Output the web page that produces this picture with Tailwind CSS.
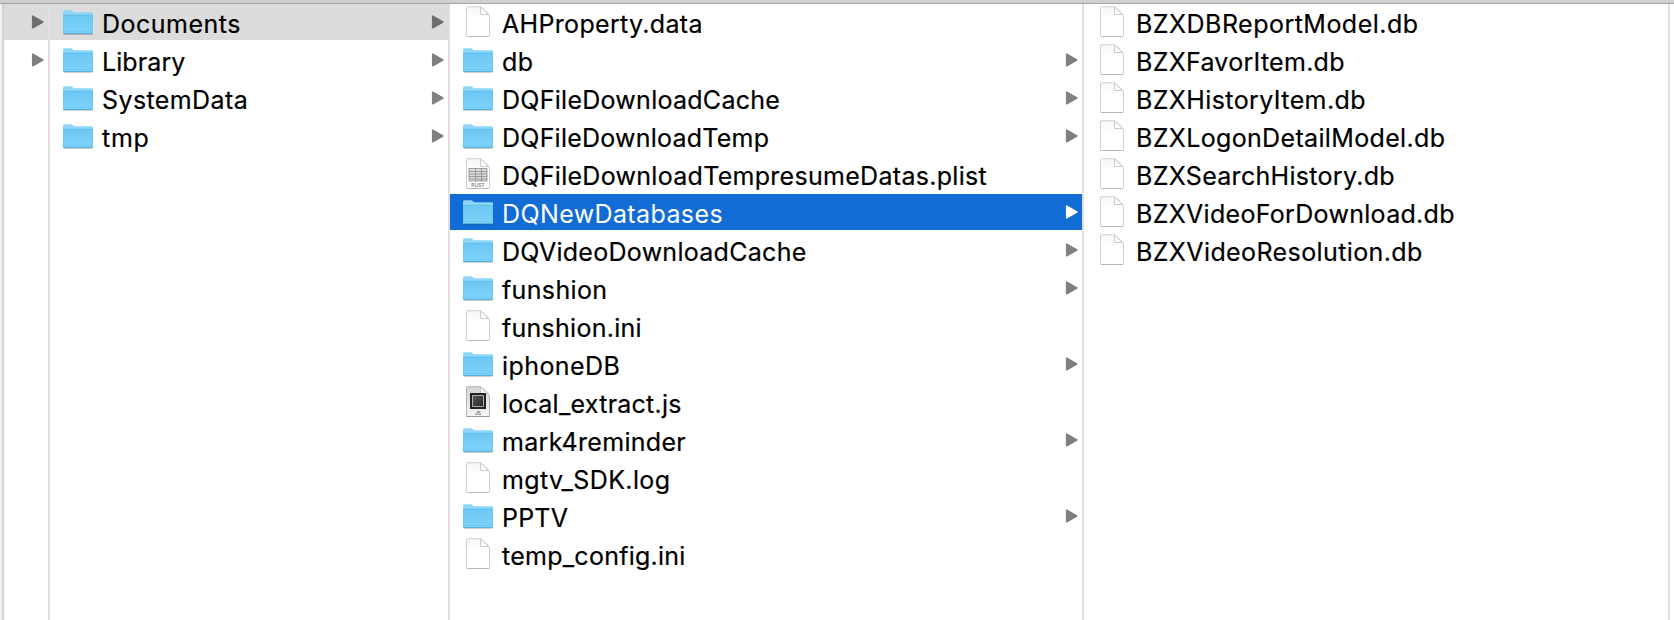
<!DOCTYPE html>
<html lang="en">
<head>
<meta charset="utf-8">
<title>Finder</title>
<script src="https://cdn.jsdelivr.net/npm/@tailwindcss/browser@4"></script>
</head>
<body class="bg-white">
<svg class="absolute size-0">
  <defs>
    <linearGradient id="fold" x1="0" y1="0" x2="0" y2="1"><stop offset="0" stop-color="#6bc8f4"/><stop offset="1" stop-color="#7fd3fa"/></linearGradient>
    <linearGradient id="page" x1="0" y1="0" x2="0" y2="1"><stop offset="0" stop-color="#f6f6f6"/><stop offset=".4" stop-color="#fff"/></linearGradient>
    <linearGradient id="grey" x1="0" y1="0" x2="0" y2="1"><stop offset="0" stop-color="#d4d4d4"/><stop offset="1" stop-color="#f6f6f6"/></linearGradient>
    <linearGradient id="dark" x1="0" y1="0" x2="1" y2="1"><stop offset="0" stop-color="#5a5a5a"/><stop offset="1" stop-color="#222"/></linearGradient>
  </defs>
</svg>
<svg class="hidden">
  <symbol id="folder" viewBox="0 0 32 32">
    <path d="M1.500 28.500H30.500" stroke="#000" stroke-opacity=".16"/>
    <path d="M1 27V6Q1 4.200 2.500 4.200H9Q10 4.200 10.700 5L12 6.300H29.800Q31 6.300 31 7.500V27Q31 28 30 28H2Q1 28 1 27Z" fill="#8dd6f8"/>
    <path d="M1 9H31V27Q31 28 30 28H2Q1 28 1 27Z" fill="url(#fold)"/>
    <path d="M1.500 9.300H30.500" stroke="#60bbe4" stroke-width=".8"/>
    <path d="M1.500 9V27M30.500 9V27M2 25.500H30" fill="none" stroke="#62bfea" stroke-opacity=".6" stroke-width=".8"/>
    <path d="M1.500 27.600H30.500" stroke="#58aad2"/>
  </symbol>
  <symbol id="file" viewBox="0 0 32 32">
    <path d="M4.500 1.500Q4.500.700 5.300.700H17.500Q19 .700 20.500 2L26 7.500Q27.500 9 27.500 11V29.700Q27.500 30.500 26.700 30.500H5.300Q4.500 30.500 4.500 29.700Z" fill="url(#page)" stroke="#d0d0d0"/>
    <path d="M5 30.500H27" stroke="#b8b8b8"/>
    <path d="M18.500 1V8.500H26.500Z" fill="#fff" stroke="#cacaca"/>
  </symbol>
  <symbol id="plist" viewBox="0 0 32 32">
    <use href="#file"/>
    <path d="M7 10.500H25V23H7Z" fill="#dcdcdc"/>
    <path d="M7 10.500H25M7 13.500H25M7 16H25M7 18.500H25M7 21H25M7 23H25M13.500 10.500V23M19.500 10.500V23M7 10.500V23M25 10.500V23" stroke="#8c8c8c" stroke-width=".8"/>
    <text x="16" y="28.600" text-anchor="middle" font-family="Inter,sans-serif" font-size="4.800" font-weight="600" fill="#777">PLIST</text>
  </symbol>
  <symbol id="js" viewBox="0 0 32 32">
    <path d="M4.500 1.500Q4.500.700 5.300.700H17.500Q19 .700 20.500 2L26 7.500Q27.500 9 27.500 11V30.500H4.500Z" fill="url(#grey)" stroke="#b5b5b5"/>
    <path d="M5 30.500H27" stroke="#999"/>
    <path d="M18.500 1V8.500H26.500Z" fill="#fafafa" stroke="#c4c4c4"/>
    <path d="M8 7H24V23H8Z" fill="#222"/>
    <path d="M10.500 9.500H21.500V20.500H10.500Z" fill="url(#dark)" stroke="#ccc" stroke-width=".8"/>
    <text x="16" y="28.600" text-anchor="middle" font-family="Inter,sans-serif" font-size="4.800" font-weight="600" fill="#666">JS</text>
  </symbol>
  <symbol id="arrow" viewBox="0 0 14 16"><path d="M1.700 2.200V13.800L11.800 8Z" fill="currentColor" stroke="currentColor" stroke-width="1.600" stroke-linejoin="round"/></symbol>
</svg>

<main class="flex h-[620px] w-[1674px] flex-col overflow-hidden bg-white font-['Inter',sans-serif] text-[25px] text-black">
  <div class="h-1 shrink-0 border-b border-[#a5a4a8] bg-[#d0ced2]"></div>
  <div class="flex min-h-0 flex-1">
    <div class="w-1 shrink-0 border-r-2 border-[#d2d2d2] bg-[#f2f2f2]"></div>
    <ul data-col="0" class="flex w-[46px] shrink-0 flex-col gap-0.5 border-r-2 border-[#e0e0e0]"></ul>
    <ul data-col="1" class="flex w-[400px] shrink-0 flex-col gap-0.5 border-r-2 border-[#e0e0e0]"></ul>
    <ul data-col="2" class="flex w-[634px] shrink-0 flex-col gap-0.5 border-r-2 border-[#e0e0e0]"></ul>
    <ul data-col="3" class="flex w-[586px] shrink-0 flex-col gap-0.5 border-r-2 border-[#e0e0e0]"></ul>
  </div>
</main>

<script>
// Each entry: icon, name, drawn width of the name, row state.
const columns = [
  [['', '', 0, 'open'], ['', '', 0, 'dir']],
  [['folder', 'Documents', 137.3, 'open'], ['folder', 'Library', 83.3, 'dir'], ['folder', 'SystemData', 144.7, 'dir'], ['folder', 'tmp', 46.5, 'dir']],
  [['file', 'AHProperty.data', 199.4], ['folder', 'db', 30.7, 'dir'], ['folder', 'DQFileDownloadCache', 277.3, 'dir'],
   ['folder', 'DQFileDownloadTemp', 266.7, 'dir'], ['plist', 'DQFileDownloadTempresumeDatas.plist', 484.5],
   ['folder', 'DQNewDatabases', 219.4, 'selected'], ['folder', 'DQVideoDownloadCache', 303.7, 'dir'],
   ['folder', 'funshion', 103.3, 'dir'], ['file', 'funshion.ini', 138.5], ['folder', 'iphoneDB', 116.5, 'dir'],
   ['js', 'local_extract.js', 178.3], ['folder', 'mark4reminder', 183.3, 'dir'], ['file', 'mgtv_SDK.log', 166.7],
   ['folder', 'PPTV', 65.7, 'dir'], ['file', 'temp_config.ini', 182.3]],
  [['file', 'BZXDBReportModel.db', 281.7], ['file', 'BZXFavorItem.db', 208.2], ['file', 'BZXHistoryItem.db', 229.2],
   ['file', 'BZXLogonDetailModel.db', 308.7], ['file', 'BZXSearchHistory.db', 258.3],
   ['file', 'BZXVideoForDownload.db', 318.2], ['file', 'BZXVideoResolution.db', 286]],
];
const rowClass = { open: 'bg-[#dcdcdc]', selected: 'bg-[#116cd6] text-white' };
const arrowClass = { open: 'text-[#6e6e6e]', dir: 'text-[#808080]', selected: 'text-white' };
const ctx = document.createElement('canvas').getContext('2d');
ctx.font = '25px Inter';
columns.forEach((rows, c) => {
  document.querySelector(`[data-col="${c}"]`).innerHTML = rows.map(([icon, name, w, state]) => {
    const spacing = name ? (w - ctx.measureText(name).actualBoundingBoxRight) / (name.length - 1) : 0;
    const weight = state === 'selected' ? '' : '[-webkit-text-stroke:0.2px_currentColor]';
    return `<li class="flex h-9 shrink-0 items-center pl-3 pr-[3px] ${rowClass[state] || ''}">
      ${icon ? `<svg class="size-8 shrink-0"><use href="#${icon}"/></svg>` : ''}
      ${name ? `<span class="ml-2 whitespace-nowrap pt-[5px] leading-none ${weight}" style="letter-spacing:${spacing.toFixed(3)}px">${name}</span>` : ''}
      ${state ? `<svg class="ml-auto h-4 w-3.5 shrink-0 ${arrowClass[state]}"><use href="#arrow"/></svg>` : ''}
    </li>`;
  }).join('');
});
</script>
</body>
</html>
